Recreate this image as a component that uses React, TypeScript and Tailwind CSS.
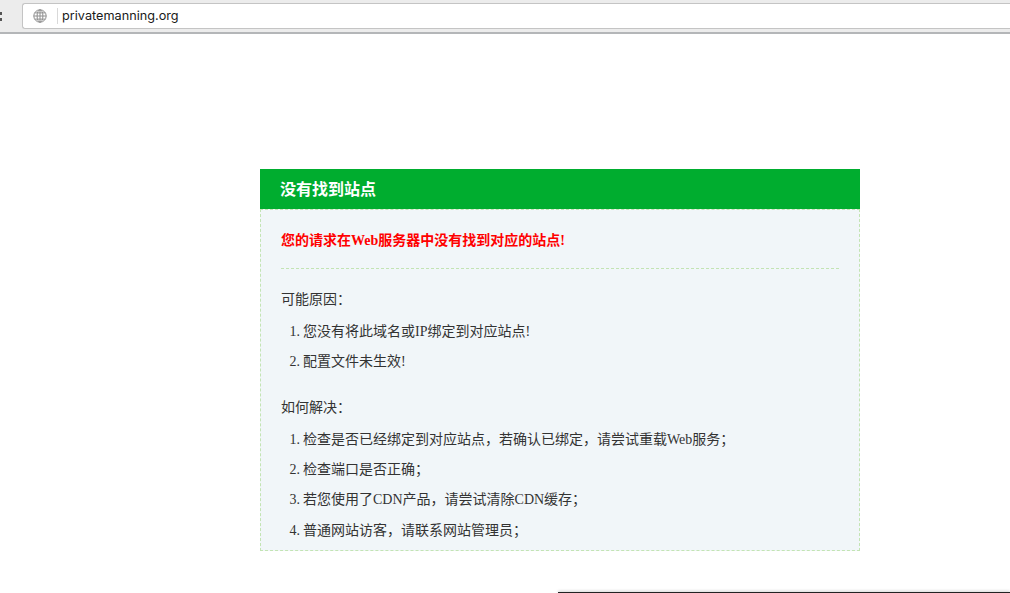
const serif = "font-['Liberation_Serif','Noto_Sans_CJK_SC',serif]";

const reasons = ["您没有将此域名或IP绑定到对应站点!", "配置文件未生效!"];

// full-width punctuation written as escapes: \uFF0C comma, \uFF1B semicolon, \uFF1A colon
const fixes = [
  "检查是否已经绑定到对应站点\uFF0C若确认已绑定\uFF0C请尝试重载Web服务\uFF1B",
  "检查端口是否正确\uFF1B",
  "若您使用了CDN产品\uFF0C请尝试清除CDN缓存\uFF1B",
  "普通网站访客\uFF0C请联系网站管理员\uFF1B",
];

const GlobeIcon = () => (
  <svg width="14" height="14" viewBox="0 0 14 14" fill="none" stroke="#8e8e8e" strokeWidth="1">
    <circle cx="7" cy="7" r="6.2" />
    <ellipse cx="7" cy="7" rx="2.9" ry="6.2" />
    <path d="M7 .8v12.4M.8 7h12.4M1.7 3.9h10.6M1.7 10.1h10.6" />
  </svg>
);

const NumberedList = ({ items }: { items: string[] }) => (
  <ol className="mt-[9px] flex flex-col gap-[8.3px] pl-[22px]">
    {items.map((item, i) => (
      <li key={item} className="flex h-[22px] items-center">
        <span className="mr-[3px] ml-[-14px] w-[11px] text-right">{i + 1}.</span>
        <span>{item}</span>
      </li>
    ))}
  </ol>
);

export default function App() {
  return (
    <div className="relative h-[593px] w-[1010px] overflow-hidden bg-white">
      {/* browser toolbar */}
      <div className="flex h-[34px] items-start border-b-2 border-[#b4b6b8] bg-[#ececec] pt-[3px]">
        <div className="mt-[9px] flex w-[22px] flex-col gap-[3px]">
          <div className="h-[3px] w-[2px] bg-[#555]" />
          <div className="h-[3px] w-[2px] bg-[#555]" />
        </div>
        <div className="flex h-[26px] flex-1 items-center rounded-l-[3px] border border-r-0 border-[#c4c4c4] bg-white">
          <div className="ml-[10px] flex w-[24px] items-center">
            <GlobeIcon />
          </div>
          <div className="h-[16px] w-px bg-[#d9d9d9]" />
          <span className="ml-[4px] font-['Inter',sans-serif] text-[12.7px] text-[#1a1a1a]">privatemanning.org</span>
        </div>
      </div>

      {/* error card */}
      <div className={`mt-[135px] ml-[260px] w-[600px] text-[14px] text-[#333] ${serif}`}>
        <h1 className="flex h-[40px] items-center bg-[#00ad2f] pt-[1px] pl-[20px] text-[16px] font-bold text-white">
          没有找到站点
        </h1>
        <div className="h-[342px] border border-t border-dashed border-[#c3e4b4] bg-[#f1f6f9] px-[20px]">
          <div className="flex h-[59px] items-end border-b border-dashed border-[#c3e4b4] pb-[17px] font-bold text-[#ff0000]">
            您的请求在Web服务器中没有找到对应的站点!
          </div>
          <h2 className="mt-[20px] h-[22px] leading-[22px]">{"可能原因\uFF1A"}</h2>
          <NumberedList items={reasons} />
          <h2 className="mt-[25px] h-[22px] leading-[22px]">{"如何解决\uFF1A"}</h2>
          <NumberedList items={fixes} />
        </div>
      </div>

      {/* window edge peeking in at the bottom */}
      <div className="absolute right-0 bottom-0 h-[2px] w-[452px] translate-y-px bg-[#222] shadow-[0_-1px_3px_rgba(0,0,0,0.2)]" />
    </div>
  );
}
